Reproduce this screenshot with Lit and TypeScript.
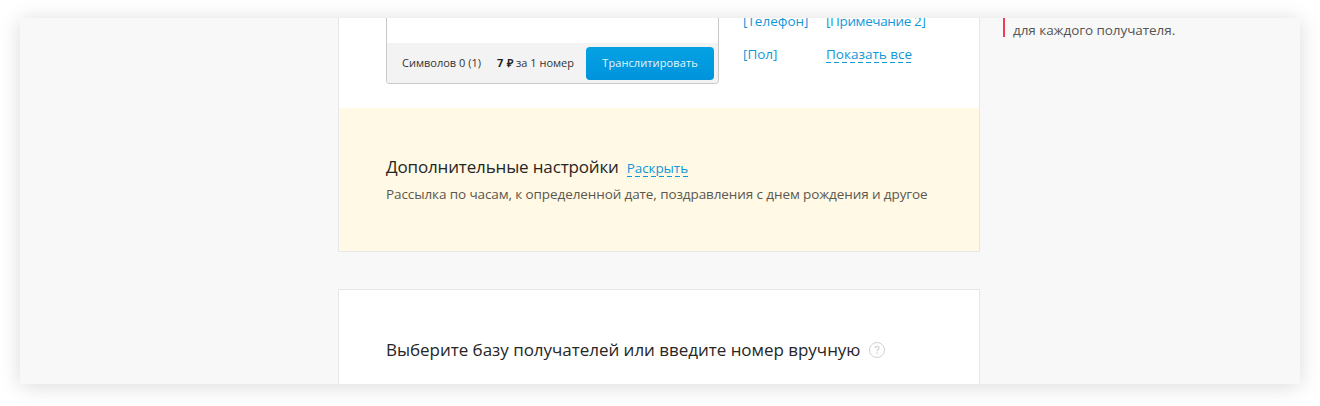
import { LitElement, html, css } from "lit";
import { customElement } from "lit/decorators.js";

@customElement("sms-editor")
class SmsEditor extends LitElement {
  static styles = css`
    :host { display: block; width: 333px; height: 66px; box-sizing: border-box;
      border: 1px solid #c9c9c9; border-top: 0; border-radius: 0 0 4px 4px; overflow: hidden; background: #fff; }
    .bar { margin-top: 25px; height: 40px; background: #f3f3f3; display: flex; align-items: center;
      box-sizing: border-box; padding: 0 4px 0 15px; font-size: 11px; color: #333; white-space: nowrap; }
    .count, .price { padding-bottom: 2px; }
    .count { width: 95px; }
    .price { width: 89px; }
    b { color: #222; word-spacing: 1px; }
    button { width: 128px; height: 33px; border: 0; border-radius: 4px; padding: 0 0 2px; color: #e6f5fd;
      font: 11px "Open Sans", sans-serif; letter-spacing: 0.1px; background: linear-gradient(#04a2e3, #0093dc); }
  `;
  render() {
    return html`<div class="bar">
      <span class="count">Символов 0 (1)</span>
      <span class="price"><b>7 ₽</b> за 1 номер</span>
      <button><span class="label">Транслитировать</span></button>
    </div>`;
  }
}

@customElement("app-root")
class AppRoot extends LitElement {
  static styles = css`
    :host { display: block; height: 406px; box-sizing: border-box; padding: 18px 20px 22px; background: #fff;
      font-family: "Open Sans", sans-serif; overflow: hidden; }
    .frame { height: 366px; background: #f8f8f8; box-shadow: 0 2px 20px rgba(0, 0, 0, 0.15); }
    .clip { height: 366px; overflow: hidden; display: flex; align-items: flex-start; padding-left: 318px; }
    .main { width: 642px; flex: none; }
    .card { background: #fff; box-sizing: border-box; border: 1px solid #e7e7e7; }
    .first { border-top: 0; height: 234px; }
    .compose { height: 90px; display: flex; padding-left: 47px; box-sizing: border-box; }
    .tags { display: grid; grid-template-columns: 83px auto; grid-auto-rows: 33px; margin: -13px 0 0 24px;
      align-content: start; justify-content: start; font-size: 13.5px; line-height: 33px; white-space: nowrap; }
    .link { color: #1297d8; }
    .rem { letter-spacing: -0.37px; }
    .dash { display: inline-block; line-height: 17px; height: 17px;
      background: repeating-linear-gradient(90deg, #1297d8 0 5px, transparent 5px 8px) 0 100% / 100% 1px no-repeat; }
    .extra { height: 143px; background: #fff9e5; padding: 47px 0 0 47px; box-sizing: border-box; white-space: nowrap; }
    .row { display: flex; align-items: baseline; }
    h2 { margin: 0; font-size: 17px; font-weight: 400; line-height: 24px; color: #262626; white-space: nowrap; }
    .t1 { letter-spacing: -0.15px; }
    .t2 { letter-spacing: -0.03px; }
    .open { margin-left: 8px; font-size: 13.5px; letter-spacing: -0.1px; }
    .note { margin: 5px 0 0; font-size: 13.5px; line-height: 20px; letter-spacing: -0.1px; color: #5b584f; }
    .second { margin-top: 37px; height: 120px; padding: 48px 0 0 47px; }
    .pick { display: flex; align-items: center; }
    .help { margin-left: 8px; width: 18px; height: 18px; }
    .aside { margin-left: 23px; height: 19px; border-left: 2px solid #ee3b56; padding-left: 8px; font-size: 13.5px;
      line-height: 25px; letter-spacing: -0.06px; color: #555; white-space: nowrap; }
  `;
  render() {
    return html`<div class="frame"><div class="clip">
      <div class="main">
        <section class="card first">
          <div class="compose">
            <sms-editor></sms-editor>
            <div class="tags">
              <span class="link tel">[Телефон]</span><span class="link rem">[Примечание 2]</span>
              <span class="link sex">[Пол]</span><span><span class="link dash all">Показать все</span></span>
            </div>
          </div>
          <div class="extra">
            <div class="row"><h2 class="t1">Дополнительные настройки</h2><span class="link dash open">Раскрыть</span></div>
            <p class="note">Рассылка по часам, к определенной дате, поздравления с днем рождения и другое</p>
          </div>
        </section>
        <section class="card second">
          <div class="pick">
            <h2 class="t2">Выберите базу получателей или введите номер вручную</h2>
            <svg class="help" viewBox="0 0 18 18" fill="none" stroke="#d2d2d2">
              <circle cx="9" cy="9" r="7.5" /><path d="M7 7.2C7.1 4.7 11 4.8 11 7.1C11 8.5 9 8.6 9 10.3M9 11.6V13" stroke-width="1.3" />
            </svg>
          </div>
        </section>
      </div>
      <aside class="aside">для каждого получателя.</aside>
    </div></div>`;
  }
}
